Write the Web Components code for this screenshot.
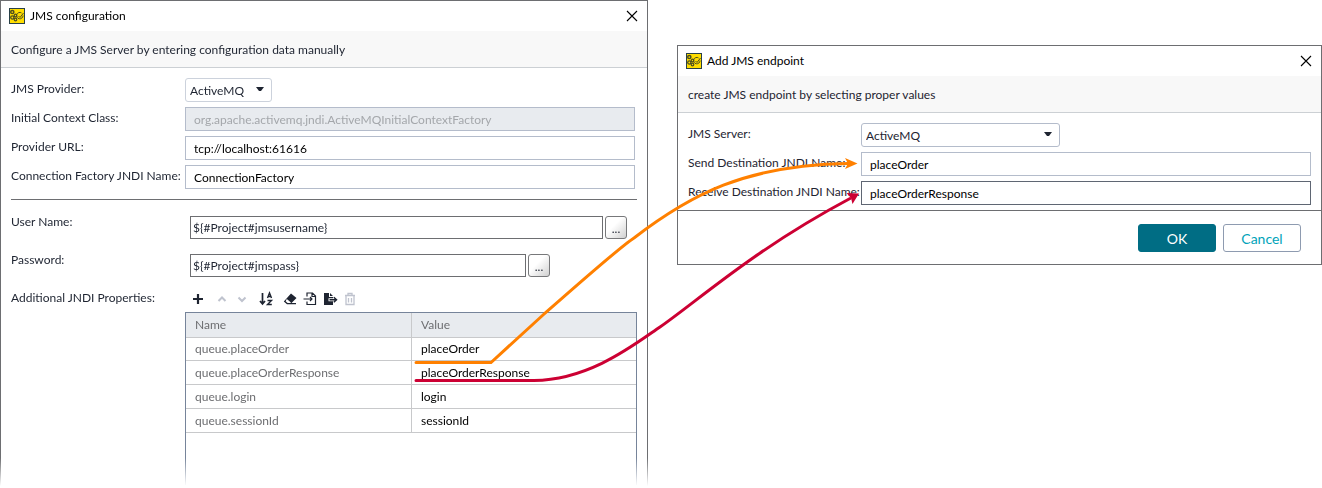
<!DOCTYPE html>
<html lang="en">
<head>
<meta charset="utf-8">
<title>JMS configuration</title>
<style>
    body {
        margin: 0;
        background: #fff;
        color: #1e2431;
        font-family: Lato, "Open Sans", sans-serif;
        font-size: 12px;
        line-height: 16px;
    }
</style>
</head>
<body>
<jms-page></jms-page>

<script>
const ICONS = {
    add: '<path d="M8 3v10M3 8h10" stroke="currentColor" stroke-width="2.2" fill="none"/>',
    up: '<path d="M4.500 10L8 6.500l3.500 3.500" stroke="currentColor" stroke-width="2" fill="none"/>',
    down: '<path d="M4.500 6.500L8 10l3.500-3.500" stroke="currentColor" stroke-width="2" fill="none"/>',
    sort: '<path d="M4.500 2v10M2 10l2.500 3 2.500-3" stroke="currentColor" stroke-width="1.700" fill="none"/><path d="M9.500 7l2-5 2 5M10 5.500h3M9.500 9.500h4l-4 4h4.300" stroke="currentColor" stroke-width="1.400" fill="none"/>',
    erase: '<path d="M9 2.500l5.500 4.500-5 5H14v1.300H5L1.800 10.500z" fill="currentColor"/><path d="M4.800 8l4.200 3.400-.7.700H5.600L3.600 10.300z" fill="#fff"/>',
    load: '<path d="M5 5.500V2h5.500L13.500 5v8.500H5V10.500M10 2v3.500h3.500" stroke="currentColor" stroke-width="1.200" fill="none"/><path d="M1.500 8H10M8 6l2 2-2 2" stroke="currentColor" stroke-width="1.100" fill="none"/>',
    save: '<path d="M2 2h5v4h4v1.300H6.500v3H11V14H2zM8 2l3 3H8z" fill="currentColor"/><path d="M7.500 8.800H13.500M11.800 6.300l2.700 2.500-2.700 2.500" stroke="currentColor" stroke-width="1.500" fill="none"/>',
    remove: '<path d="M3 4.500h10M6 4V2.500h4V4M4 4.500v9h8v-9M6.500 7v4.500M9.500 7v4.500" stroke="currentColor" stroke-width="1.300" fill="none"/>'
};

// Window frame: title bar, description band, body and an optional footer
class AppDialog extends HTMLElement {
    constructor() {
        super();
        this.attachShadow({ mode: 'open' });
        this.shadowRoot.innerHTML = `
            <style>
            :host {
                display: block;
                box-sizing: border-box;
                border: 1px solid #6d6e71;
                background: #fff;
            }
            header {
                display: flex;
                align-items: center;
                gap: 5px;
                height: 30px;
                padding: 0 9px 0 8px;
                color: #000;
            }
            h1 {
                flex: 1;
                margin: 0;
                font-size: 12px;
                font-weight: normal;
            }
            button {
                display: flex;
                padding: 0;
                border: 0;
                background: none;
                color: #000;
            }
            svg {
                display: block;
            }
            .description {
                margin: 0;
                padding: 11px 10px 9px;
                border-bottom: 1px solid #ccd0d4;
                background: #f8f8f8;
            }
            .body {
                padding: 10px 10px 5px;
            }
            ::slotted([slot=footer]) {
                display: flex;
                justify-content: flex-end;
                gap: 7px;
                padding: 13px 20px 12px;
                border-top: 1px solid #6d6e71;
            }
            </style>
            <header>
                <svg width="16" height="16" viewBox="0 0 16 16" aria-hidden="true">
                    <rect x=".5" y=".5" width="15" height="15" fill="#fd0" stroke="#284048"/>
                    <g fill="none" stroke="#4d4f20">
                        <circle cx="3.300" cy="4" r="1.600" stroke-width="1.500"/>
                        <circle cx="3.300" cy="9.500" r="1.600" stroke-width="1.300"/>
                        <circle cx="6.500" cy="7.500" r="1.300" stroke-width="1.200"/>
                        <circle cx="6.500" cy="11.500" r="1.300" stroke-width="1.200"/>
                        <path d="M14 7.500a3.200 3.200 0 1 1-1.500-2.600"/>
                        <path d="M9.500 8l1.500 1.500L14.500 5"/>
                    </g>
                </svg>
                <h1></h1>
                <button type="button" aria-label="Close">
                    <svg width="12" height="12" viewBox="0 0 12 12"><path d="M1 1l10 10M11 1L1 11" stroke="currentColor" stroke-width="1.100"/></svg>
                </button>
            </header>
            <p class="description"></p>
            <div class="body"><slot></slot></div>
            <slot name="footer"></slot>
        `;
        this.shadowRoot.querySelector('h1').textContent = this.getAttribute('heading');
        this.shadowRoot.querySelector('.description').textContent = this.getAttribute('description');
    }
}

// One labelled control. kind: text, select or expression
class FormField extends HTMLElement {
    constructor() {
        super();
        this.attachShadow({ mode: 'open' });
        const kind = this.getAttribute('kind') || 'text';
        const value = this.getAttribute('value');
        let control = `<input id="control" type="text" value="${value}" ${this.hasAttribute('disabled') ? 'disabled' : ''}>`;
        if (kind === 'select') {
            control = `
                <div class="select">
                    <select id="control"><option>${value}</option></select>
                    <svg width="8" height="4" viewBox="0 0 8 4" aria-hidden="true"><path d="M0 0h8L5 4H3z" fill="#1e2431"/></svg>
                </div>`;
        }
        if (kind === 'expression') {
            control += '<button type="button" aria-label="Get data">...</button>';
        }
        this.shadowRoot.innerHTML = `
            <style>
            :host {
                display: grid;
                grid-template-columns: var(--label-width, 174px) minmax(0, 1fr);
            }
            label {
                line-height: 22px;
                white-space: nowrap;
            }
            input, select, button {
                box-sizing: border-box;
                margin: 0;
                font: inherit;
            }
            input {
                width: 100%;
                height: 24px;
                padding: 0 8px;
                border: 1px solid var(--field-border, #b4bccb);
                border-radius: 0;
                background: #fff;
                color: #000;
            }
            input:disabled {
                background: #e8ebef;
                color: #a4a7ab;
            }
            .select {
                position: relative;
                width: var(--select-width, 87px);
            }
            select {
                display: block;
                appearance: none;
                width: 100%;
                height: 24px;
                padding: 2px 20px 0 4px;
                border: 1px solid var(--select-border, #ccd2dc);
                border-radius: 3px;
                background: #fff;
                color: inherit;
            }
            .select svg {
                position: absolute;
                top: 9px;
                right: 8px;
            }
            .expression {
                display: flex;
                gap: 2px;
                padding-left: 5px;
            }
            .expression input {
                height: 23px;
                max-width: var(--expression-width, none);
                padding: 0 2px;
                border-color: #6d6e71;
                color: inherit;
            }
            button {
                flex: none;
                width: 22px;
                height: 23px;
                padding: 2px 0 0;
                border: 1px solid #77787a;
                border-radius: 3px;
                background: linear-gradient(135deg, #fff 40%, #d0d0d0);
                color: #1e2431;
            }
            :host([kind=expression]) label {
                line-height: 12px;
            }
            </style>
            <label for="control"></label>
            <div class="${kind}">${control}</div>
        `;
        this.shadowRoot.querySelector('label').textContent = this.getAttribute('label');
    }
}

class IconButton extends HTMLElement {
    constructor() {
        super();
        this.attachShadow({ mode: 'open' });
        this.shadowRoot.innerHTML = `
            <style>
            :host {
                display: block;
                color: #1e2431;
            }
            button {
                display: flex;
                justify-content: center;
                width: 20px;
                height: 16px;
                padding: 0;
                border: 0;
                background: none;
                color: inherit;
            }
            button:disabled {
                color: #bfc3ce;
            }
            svg {
                flex: none;
            }
            </style>
            <button type="button" aria-label="${this.getAttribute('icon')}" ${this.hasAttribute('disabled') ? 'disabled' : ''}>
                <svg width="16" height="16" viewBox="0 0 16 16">${ICONS[this.getAttribute('icon')]}</svg>
            </button>
        `;
    }
}

class PropertyTable extends HTMLElement {
    constructor() {
        super();
        this.attachShadow({ mode: 'open' });
        const rows = JSON.parse(this.getAttribute('rows'));
        this.shadowRoot.innerHTML = `
            <style>
            :host {
                display: block;
                padding-bottom: 52px;
                border: 1px solid #76849a;
                border-bottom: 0;
            }
            table {
                width: 100%;
                border-spacing: 0;
                table-layout: fixed;
            }
            th, td {
                box-sizing: border-box;
                height: 24px;
                padding: 0 9px;
                border-bottom: 1px solid #c8c9cb;
                text-align: left;
                font-weight: normal;
                color: #000;
            }
            th {
                height: 25px;
                background: #e8ebef;
            }
            tbody tr:first-child td {
                height: 23px;
            }
            th, td:first-child {
                color: #6d6e71;
            }
            th:first-child, td:first-child {
                border-right: 1px solid #c8c9cb;
            }
            .name {
                width: 226px;
            }
            </style>
            <table>
                <colgroup><col class="name"><col></colgroup>
                <thead><tr><th>Name</th><th>Value</th></tr></thead>
                <tbody>${rows.map(([name, value]) => `<tr><td>${name}</td><td>${value}</td></tr>`).join('')}</tbody>
            </table>
        `;
    }
}

class DialogButton extends HTMLElement {
    constructor() {
        super();
        this.attachShadow({ mode: 'open' });
        this.shadowRoot.innerHTML = `
            <style>
            :host {
                display: block;
            }
            button {
                display: block;
                box-sizing: border-box;
                width: 78px;
                height: 28px;
                padding: 2px 0 0;
                border: 1px solid #8e9bb0;
                border-radius: 3px;
                background: #fff;
                color: #00a3b9;
                font: inherit;
                font-size: 14px;
            }
            :host([primary]) button {
                border-color: #006d84;
                background: #006d84;
                color: #fff;
            }
            </style>
            <button type="button"><slot></slot></button>
        `;
    }
}

// Arrows from the table values to the endpoint fields
class LinkArrows extends HTMLElement {
    constructor() {
        super();
        this.attachShadow({ mode: 'open' });
        this.shadowRoot.innerHTML = `
            <style>
            :host {
                display: block;
                position: absolute;
                inset: 0 0 auto;
                pointer-events: none;
            }
            svg {
                display: block;
                width: 100%;
            }
            </style>
            <svg viewBox="0 0 1322 488" fill="none" stroke-width="3" stroke-linecap="round" aria-hidden="true">
                <path stroke="#ff8000" d="M416 362.500H491L543 315C585 278 620 247 634 238C690 195 745 165 848 163.500"/>
                <path fill="#ff8000" d="M857.500 163.500L845 158L848 163.500L845 169z"/>
                <path stroke="#cc0033" d="M416 380.500H534C590 380 635 344 660 327C700 299 755 249 850 198.500"/>
                <path fill="#cc0033" d="M859 193.500L846.500 193L851 198L852.500 204z"/>
            </svg>
        `;
    }
}

class JmsPage extends HTMLElement {
    constructor() {
        super();
        this.attachShadow({ mode: 'open' });
        this.shadowRoot.innerHTML = `
            <style>
            :host {
                display: grid;
                grid-template-columns: minmax(0, 648fr) minmax(0, 645fr);
                gap: 29px;
                align-items: start;
                position: relative;
            }
            /* the long dialog fades out at its lower edge */
            .config {
                border-bottom: 0;
                mask-image: linear-gradient(#000 calc(100% - 32px), transparent calc(100% - 4px));
            }
            .endpoint {
                --label-width: 173px;
                --select-width: 199px;
                --select-border: #b4bccb;
                margin-top: 45px;
            }
            .fields {
                display: grid;
                gap: 5px;
            }
            .config .fields {
                padding-right: 2px;
            }
            .credentials {
                display: grid;
                gap: 15px;
                padding-right: 10px;
            }
            .password {
                --expression-width: 336px;
            }
            .focused {
                --field-border: #5f6673;
            }
            hr {
                height: 1px;
                margin: 10px 0 16px;
                border: 0;
                background: #6d6e71;
            }
            .properties {
                display: grid;
                grid-template-columns: 174px minmax(0, 1fr);
                margin-top: 14px;
                line-height: 14px;
            }
            .toolbar {
                display: flex;
                gap: 4px;
                padding: 0 3px 5px;
            }
            .group {
                display: flex;
            }
            </style>
            <app-dialog class="config" heading="JMS configuration" description="Configure a JMS Server by entering configuration data manually">
                <div class="fields">
                    <form-field kind="select" label="JMS Provider:" value="ActiveMQ"></form-field>
                    <form-field label="Initial Context Class:" value="org.apache.activemq.jndi.ActiveMQInitialContextFactory" disabled></form-field>
                    <form-field label="Provider URL:" value="tcp://localhost:61616"></form-field>
                    <form-field label="Connection Factory JNDI Name:" value="ConnectionFactory"></form-field>
                </div>
                <hr>
                <div class="credentials">
                    <form-field kind="expression" label="User Name:" value="\${#Project#jmsusername}"></form-field>
                    <form-field class="password" kind="expression" label="Password:" value="\${#Project#jmspass}"></form-field>
                </div>
                <div class="properties">
                    <span>Additional JNDI Properties:</span>
                    <div>
                        <div class="toolbar">
                            <icon-button icon="add"></icon-button>
                            <div class="group">
                                <icon-button icon="up" disabled></icon-button>
                                <icon-button icon="down" disabled></icon-button>
                            </div>
                            <icon-button icon="sort"></icon-button>
                            <div class="group">
                                <icon-button icon="erase"></icon-button>
                                <icon-button icon="load"></icon-button>
                                <icon-button icon="save"></icon-button>
                                <icon-button icon="remove" disabled></icon-button>
                            </div>
                        </div>
                        <property-table rows='[["queue.placeOrder","placeOrder"],["queue.placeOrderResponse","placeOrderResponse"],["queue.login","login"],["queue.sessionId","sessionId"]]'></property-table>
                    </div>
                </div>
            </app-dialog>
            <app-dialog class="endpoint" heading="Add JMS endpoint" description="create JMS endpoint by selecting proper values">
                <div class="fields">
                    <form-field kind="select" label="JMS Server:" value="ActiveMQ"></form-field>
                    <form-field label="Send Destination JNDI Name:" value="placeOrder"></form-field>
                    <form-field class="focused" label="Receive Destination JNDI Name:" value="placeOrderResponse"></form-field>
                </div>
                <div slot="footer">
                    <dialog-button primary>OK</dialog-button>
                    <dialog-button>Cancel</dialog-button>
                </div>
            </app-dialog>
            <link-arrows></link-arrows>
        `;
    }
}

customElements.define('app-dialog', AppDialog);
customElements.define('form-field', FormField);
customElements.define('icon-button', IconButton);
customElements.define('property-table', PropertyTable);
customElements.define('dialog-button', DialogButton);
customElements.define('link-arrows', LinkArrows);
customElements.define('jms-page', JmsPage);
</script>
</body>
</html>
